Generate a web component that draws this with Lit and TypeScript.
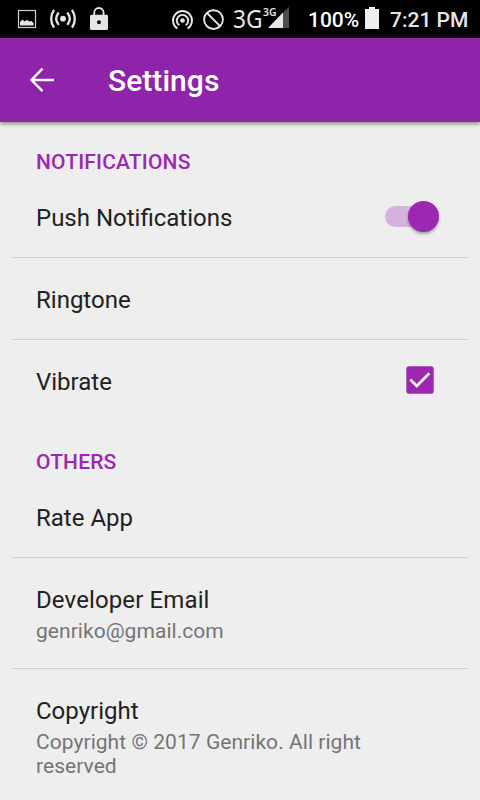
import { LitElement, html, css, nothing } from "lit";
import { customElement, property } from "lit/decorators.js";

@customElement("status-bar")
class StatusBar extends LitElement {
  static styles = css`
    :host { display: flex; height: 38px; background: #000; color: #e6e6e6;
      font: 500 21px/38px Roboto, sans-serif; white-space: nowrap; }
    svg { display: block; flex: none; height: 38px; }
    text { font-family: "Noto Sans", sans-serif; fill: #e6e6e6; }
    .big { font-size: 25.5px; font-weight: 400; }
    .small { font-size: 11px; font-weight: 600; }
    .percent { width: 58px; padding-top: 1px; margin-left: -1px; color: #fff; }
    .clock { padding-top: 1px; margin-left: 11px; }
  `;

  render() {
    return html`
      <svg width="160" viewBox="0 0 160 38">
        <rect x="18.500" y="10.500" width="17" height="17" fill="none" stroke="#d0d0d0" stroke-width="1.200"></rect>
        <path d="M20 25.500v-3.500l2.500-2.500 2 2 2.500-1.500 2.500 1.500 2-.5 2 2v2.500z" fill="#e6e6e6"></path>
        <circle cx="63" cy="18.700" r="2.900" fill="#e6e6e6"></circle>
        <path d="M58.700 12.500q-5 6.200 0 12.400M67.300 12.500q5 6.200 0 12.400M54 9.800q-5.600 8.900 0 17.800M72 9.800q5.600 8.900 0 17.800" fill="none" stroke="#e6e6e6" stroke-width="2.300"></path>
        <path d="M94.200 15.500v-2.500a4.700 5 0 0 1 9.400 0v2.500" fill="none" stroke="#e6e6e6" stroke-width="1.800"></path>
        <path fill-rule="evenodd" d="M91.500 14.700h15a1.500 1.500 0 0 1 1.500 1.500v12.300a1.500 1.500 0 0 1-1.500 1.500h-15a1.500 1.500 0 0 1-1.500-1.500v-12.300a1.500 1.500 0 0 1 1.500-1.500zM99 20.200a2 2 0 1 0 0 4 2 2 0 0 0 0-4z" fill="#e6e6e6"></path>
      </svg>
      <svg width="149" viewBox="160 0 149 38">
        <circle cx="182.500" cy="20.500" r="2.300" fill="#e6e6e6"></circle>
        <g fill="none" stroke="#e6e6e6" stroke-width="1.900">
          <path d="M179.300 25.300a5.700 5.700 0 1 1 6.400 0M177.400 28.500a9.500 9.500 0 1 1 10.200 0"></path>
          <circle cx="213.500" cy="19.600" r="9.400"></circle>
          <path d="M207 13l13 13.200"></path>
        </g>
        <text class="big" x="233" y="28" textLength="29.500" lengthAdjust="spacingAndGlyphs">3G</text>
        <text class="small" x="263" y="16" textLength="13.500" lengthAdjust="spacingAndGlyphs">3G</text>
        <path d="M268 28l15-15.500v15.500z" fill="#e6e6e6"></path>
        <path d="M283 12.500l6-5.500v21h-6z" fill="#4d4d4d"></path>
      </svg>
      <div class="percent">100%</div>
      <svg width="13" viewBox="366 0 13 38" overflow="visible">
        <path d="M365 9h4V7h6v2h4v20h-14z" fill="#eee"></path>
      </svg>
      <div class="clock">7:21 PM</div>
    `;
  }
}

@customElement("app-toolbar")
class AppToolbar extends LitElement {
  @property() heading = "";

  static styles = css`
    :host { display: flex; align-items: center; height: 84px; padding-left: 24px; box-sizing: border-box;
      background: #8e24aa; color: #fff; position: relative;
      box-shadow: 0 2px 4px rgba(0, 0, 0, .42); }
    svg { width: 36px; height: 36px; margin-right: 48px; }
    h1 { margin: 0; padding-top: 2px; font: 500 30px/36px Roboto, sans-serif; letter-spacing: .05px; }
  `;

  render() {
    return html`
      <svg viewBox="0 0 36 36"><path d="M30 18H8M18.500 6.700L7.500 18l11 11.200" fill="none" stroke="#fff" stroke-width="2.400"></path></svg>
      <h1>${this.heading}</h1>
    `;
  }
}

@customElement("preference-row")
class PreferenceRow extends LitElement {
  @property() label = "";
  @property() summary = "";
  @property() widget = "";

  static styles = css`
    :host { display: flex; align-items: center; justify-content: space-between; box-sizing: border-box;
      min-height: 82px; margin: 0 12px; padding: 0 24px; border-bottom: 1px solid #d0d0d0; }
    :host([last]) { border-color: transparent; }
    .text { padding: 25px 0 22px; max-width: 350px; }
    .label { font-size: 24px; line-height: 34px; color: #212121; }
    .summary { font-size: 21px; line-height: 24px; color: #757575; padding-top: 2px; letter-spacing: .05px; }
    :host([summary]) .text { padding: 25px 0; }
    :host([summary]:not([last])) .label { letter-spacing: .12px; }
    .switch { width: 53px; height: 31px; margin-right: 6px; display: flex; align-items: center; position: relative; }
    .track { width: 43px; height: 21px; border-radius: 11px; background: #d6b2de; }
    .thumb { position: absolute; right: -.5px; top: 0; width: 31px; height: 31px; border-radius: 50%;
      background: #9c27b0; box-shadow: 0 2px 3px rgba(0, 0, 0, .32); }
    .check { width: 28px; height: 28px; margin: -1px 10px 0 0; display: block; }
  `;

  render() {
    return html`
      <div class="text">
        <div class="label">${this.label}</div>
        ${this.summary ? html`<div class="summary">${this.summary}</div>` : nothing}
      </div>
      ${this.widget === "switch" ? html`<div class="switch"><div class="track"></div><div class="thumb"></div></div>` : nothing}
      ${this.widget === "check" ? html`<svg class="check" viewBox="0 0 28 28">
        <rect x=".3" y=".3" width="27.400" height="27.400" rx="2.800" fill="#9c27b0"></rect>
        <path d="M4.300 13.500l6.500 6.400L23.300 7.200" fill="none" stroke="#eee" stroke-width="2.800"></path>
      </svg>` : nothing}
    `;
  }
}

interface Preference { label: string; summary?: string; widget?: string; }

@customElement("app-root")
class AppRoot extends LitElement {
  static styles = css`
    :host { display: block; height: 800px; overflow: hidden; background: #eee; font-family: Roboto, sans-serif; }
    h2 { margin: 0; height: 54px; box-sizing: border-box; padding: 28px 36px 0;
      font-size: 21px; line-height: 25px; font-weight: 500; letter-spacing: .17px; color: #9c27b0; }
  `;

  private sections: { name: string; items: Preference[] }[] = [
    { name: "NOTIFICATIONS", items: [
      { label: "Push Notifications", widget: "switch" },
      { label: "Ringtone" },
      { label: "Vibrate", widget: "check" },
    ] },
    { name: "OTHERS", items: [
      { label: "Rate App" },
      { label: "Developer Email", summary: "genriko@gmail.com" },
      { label: "Copyright", summary: "Copyright © 2017 Genriko. All right reserved" },
    ] },
  ];

  render() {
    return html`
      <status-bar></status-bar>
      <app-toolbar heading="Settings"></app-toolbar>
      ${this.sections.map((section) => html`
        <h2>${section.name}</h2>
        ${section.items.map((item, i) => html`
          <preference-row label=${item.label} summary=${item.summary ?? nothing}
            widget=${item.widget ?? nothing} ?last=${i === section.items.length - 1}></preference-row>
        `)}
      `)}
    `;
  }
}
